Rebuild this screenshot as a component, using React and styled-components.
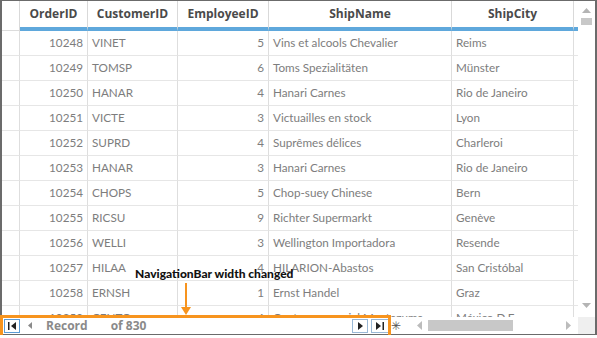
import React from 'react';
import styled, { createGlobalStyle } from 'styled-components';

const Global = createGlobalStyle`
  body {
    margin: 0;
    background: #fff;
    font-family: "Open Sans", "Noto Sans", sans-serif;
  }
`;

const COLS = '18px 68px 90px 91px 183px 122px 4px';

const orders = [
  ['10248', 'VINET', '5', 'Vins et alcools Chevalier', 'Reims'],
  ['10249', 'TOMSP', '6', 'Toms Spezialitäten', 'Münster'],
  ['10250', 'HANAR', '4', 'Hanari Carnes', 'Rio de Janeiro'],
  ['10251', 'VICTE', '3', 'Victuailles en stock', 'Lyon'],
  ['10252', 'SUPRD', '4', 'Suprêmes délices', 'Charleroi'],
  ['10253', 'HANAR', '3', 'Hanari Carnes', 'Rio de Janeiro'],
  ['10254', 'CHOPS', '5', 'Chop-suey Chinese', 'Bern'],
  ['10255', 'RICSU', '9', 'Richter Supermarkt', 'Genève'],
  ['10256', 'WELLI', '3', 'Wellington Importadora', 'Resende'],
  ['10257', 'HILAA', '4', 'HILARION-Abastos', 'San Cristóbal'],
  ['10258', 'ERNSH', '1', 'Ernst Handel', 'Graz'],
  ['10259', 'CENTC', '4', 'Centro comercial Moctezuma', 'México D.F.'],
];

const Frame = styled.div`
  position: relative;
  width: 597px;
  height: 335px;
  box-sizing: border-box;
  border: 1px solid #6b6b6b;
  border-left-width: 2px;
  border-right-width: 2px;
  display: flex;
  flex-direction: column;
  overflow: visible;
`;

const Top = styled.div`
  display: flex;
  height: 316px;
`;

const Table = styled.div`
  width: 576px;
  display: flex;
  flex-direction: column;
  overflow: hidden;
`;

const HeaderRow = styled.div`
  display: grid;
  grid-template-columns: ${COLS};
  height: 30px;
  flex-shrink: 0;
`;

const HeadCell = styled.div`
  box-sizing: border-box;
  border-right: ${p => (p.$last ? 'none' : '1px solid #d9d9d9')};
  border-bottom: ${p => (p.$indicator ? '1px solid #dcdcdc' : '4px solid #5fa8dc')};
  ${p => p.$indicator && 'height: 30px; margin-bottom: -1px;'}
  font-size: 12px;
  font-weight: 700;
  color: #4a4a4a;
  display: flex;
  align-items: center;
  justify-content: center;
  padding-bottom: 1px;
`;

const Row = styled.div`
  display: grid;
  grid-template-columns: ${COLS};
  height: 25px;
  flex-shrink: 0;
`;

const Cell = styled.div`
  box-sizing: border-box;
  border-right: ${p => (p.$last ? 'none' : '1px solid #dedede')};
  border-bottom: 1px solid #e6e6e6;
  font-family: Lato, "Open Sans", sans-serif;
  font-size: 11.7px;
  color: #7d7d7d;
  display: flex;
  align-items: center;
  justify-content: ${p => (p.$num ? 'flex-end' : 'flex-start')};
  padding: 0 4px 3px;
  white-space: nowrap;
  overflow: hidden;
`;

const VScroll = styled.div`
  flex: 1;
  display: flex;
  flex-direction: column;
  align-items: center;
  padding: 7px 0 9px;
  justify-content: space-between;
`;

const VThumbGroup = styled.div`
  display: flex;
  flex-direction: column;
  align-items: center;
  gap: 5px;
`;

const VThumb = styled.div`
  width: 11px;
  height: 7px;
  background: #c8c8c8;
`;

const Bottom = styled.div`
  display: flex;
  height: 17px;
`;

const NavBar = styled.div`
  width: 385px;
  display: flex;
  align-items: center;
  padding-left: 2px;
`;

const NavButton = styled.div`
  box-sizing: border-box;
  width: ${p => p.$w || 16}px;
  height: 14px;
  margin-left: ${p => p.$ml || 0}px;
  border: 1px solid ${p => p.$border || 'transparent'};
  display: flex;
  align-items: center;
  justify-content: center;
  flex-shrink: 0;
`;

const NavLabel = styled.span`
  font-size: 12px;
  font-weight: 700;
  color: #8a8a8a;
  margin-left: ${p => p.$ml}px;
`;

const Spacer = styled.div`
  flex: 1;
`;

const HScroll = styled.div`
  flex: 1;
  display: flex;
  align-items: center;
`;

const NewRow = styled.span`
  font-size: 12px;
  color: #555;
  width: 12px;
  margin-left: 2px;
  line-height: 1;
`;

const ScrollArrow = styled.div`
  display: flex;
  margin: 0 ${p => p.$mr || 0}px 0 ${p => p.$ml || 0}px;
`;

const HThumb = styled.div`
  width: 85px;
  height: 11px;
  background: #c8c8c8;
  margin-left: 6px;
`;

const Corner = styled.div`
  width: 17px;
  background: #efefef;
`;

const Callout = styled.div`
  position: absolute;
  left: 133px;
  top: 265px;
  font-family: Lato, "Open Sans", sans-serif;
  font-size: 12px;
  font-weight: 900;
  color: #111;
  white-space: nowrap;
`;

const Highlight = styled.div`
  position: absolute;
  left: -2px;
  top: 314px;
  width: 391px;
  height: 24px;
  box-sizing: border-box;
  border: 3px solid #f7941e;
  pointer-events: none;
`;

const ArrowSvg = styled.svg`
  position: absolute;
  left: 177px;
  top: 282px;
`;

const Tri = ({ dir, color = '#222', w = 5, h = 8, bar }) => {
  const pts = dir === 'left' ? `${w},0 ${w},${h} 0,${h / 2}`
    : dir === 'right' ? `0,0 0,${h} ${w},${h / 2}`
    : dir === 'up' ? `0,${h} ${w},${h} ${w / 2},0`
    : `0,0 ${w},0 ${w / 2},${h}`;
  const total = bar ? w + 3 : w;
  return (
    <svg width={total} height={h} viewBox={`0 0 ${total} ${h}`}>
      {bar === 'left' && <rect x="0" y="0" width="1.5" height={h} fill={color} />}
      <polygon points={pts} fill={color} transform={bar === 'left' ? 'translate(3 0)' : undefined} />
      {bar === 'right' && <rect x={w + 1.5} y="0" width="1.5" height={h} fill={color} />}
    </svg>
  );
};

const Arrow = () => (
  <ArrowSvg width="14" height="34" viewBox="0 0 14 34">
    <line x1="7" y1="0" x2="7" y2="25" stroke="#f7941e" strokeWidth="2" />
    <polygon points="2,24 12,24 7,32" fill="#f7941e" />
  </ArrowSvg>
);

export default function App() {
  const headers = ['OrderID', 'CustomerID', 'EmployeeID', 'ShipName', 'ShipCity'];
  return (
    <>
      <Global />
      <Frame>
        <Top>
          <Table>
            <HeaderRow>
              <HeadCell $indicator />
              {headers.map(h => <HeadCell key={h}>{h}</HeadCell>)}
              <HeadCell $last />
            </HeaderRow>
            {orders.map(o => (
              <Row key={o[0]}>
                <Cell />
                <Cell $num>{o[0]}</Cell>
                <Cell>{o[1]}</Cell>
                <Cell $num>{o[2]}</Cell>
                <Cell>{o[3]}</Cell>
                <Cell>{o[4]}</Cell>
                <Cell $last />
              </Row>
            ))}
          </Table>
          <VScroll>
            <VThumbGroup>
              <Tri dir="up" color="#b4b4b4" w={9} h={5} />
              <VThumb />
            </VThumbGroup>
            <Tri dir="down" color="#b4b4b4" w={9} h={5} />
          </VScroll>
        </Top>
        <Bottom>
          <NavBar>
            <NavButton $border="#5b9bd5"><Tri dir="left" bar="left" /></NavButton>
            <NavButton $w={20}><Tri dir="left" color="#8a8a8a" w={4} h={7} /></NavButton>
            <NavLabel $ml={6}>Record</NavLabel>
            <NavLabel $ml={23}>of 830</NavLabel>
            <Spacer />
            <NavButton $border="#9ab8d6"><Tri dir="right" /></NavButton>
            <NavButton $border="#9ab8d6" $w={18} $ml={3}><Tri dir="right" bar="right" /></NavButton>
          </NavBar>
          <HScroll>
            <NewRow>✳</NewRow>
            <ScrollArrow $ml={14}><Tri dir="left" color="#bcbcbc" w={5} h={9} /></ScrollArrow>
            <HThumb />
            <Spacer />
            <ScrollArrow $mr={7}><Tri dir="right" color="#bcbcbc" w={5} h={9} /></ScrollArrow>
          </HScroll>
          <Corner />
        </Bottom>
        <Callout>NavigationBar width changed</Callout>
        <Arrow />
        <Highlight />
      </Frame>
    </>
  );
}
